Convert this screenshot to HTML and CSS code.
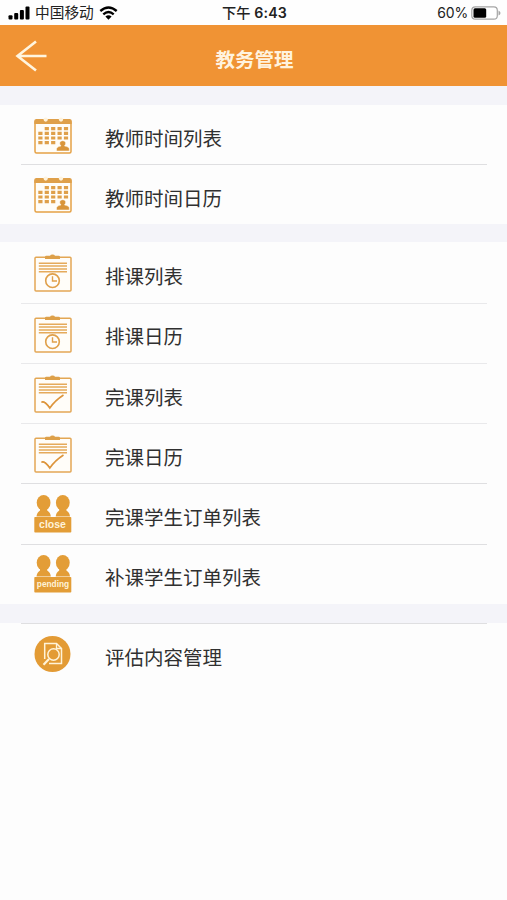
FILE: index.html
```html
<!DOCTYPE html>
<html lang="zh-CN">
<head>
  <meta charset="UTF-8">
  <meta name="viewport" content="width=device-width, initial-scale=1.0">
  <link rel="stylesheet" href="styles.css">
  <title>教务管理</title>
</head>
<body>
  <!-- shared icons -->
  <svg class="sprite" width="0" height="0">
    <symbol id="calendar" viewBox="0 0 40 40">
      <rect x="2" y="5.500" width="36" height="32.500" rx="1.5" fill="#fffdf8" stroke="#e5a145" stroke-width="1.5"/>
      <path d="M1.3 9V6Q1.3 4 3.3 4H36.7Q38.7 4 38.7 6V9Z" fill="#dfa04a"/>
      <circle cx="12.700" cy="4.600" r="2.100" fill="#fff3dc"/>
      <circle cx="28" cy="4.600" r="2.100" fill="#fff3dc"/>
      <path d="M11.700 13.600H35.500M5.300 18.300H35.500M5.300 23H35.500M5.300 27.700H23" stroke="#dfa04a" stroke-width="3.200" stroke-dasharray="4.200 2.200"/>
      <path d="M23.500 36V33.700Q24 31.500 28 31Q26.300 29.300 26.700 27.700Q27.200 25.700 29.700 25.700Q32.200 25.700 32.700 27.700Q33 29.300 31.500 31Q35.800 31.500 36.300 33.700V36Z" fill="#d9953a" stroke="#fffdf8" stroke-width=".5"/>
    </symbol>
    <symbol id="board" viewBox="0 0 40 40">
      <rect x="2" y="5.200" width="36" height="33.800" rx="1" fill="#fffdf9" stroke="#e3a755" stroke-width="1.500"/>
      <path d="M12 7V5Q12 3.700 13.300 3.700H17Q17.500 2.500 19.500 2.500Q21.500 2.500 22 3.700H25.700Q27 3.700 27 5V7Z" fill="#dda04a"/>
      <path d="M5.800 11.200H34M5.800 14.100H34M5.800 17H34M5.800 19.800H34" stroke="#e5aa5b" stroke-width="1.500"/>
    </symbol>
    <symbol id="board-clock" viewBox="0 0 40 40">
      <use href="#board"/>
      <circle cx="19.500" cy="28.700" r="6.800" fill="#fffdf9" stroke="#e0a04a" stroke-width="1.600"/>
      <path d="M19.500 24.300V29H24" fill="none" stroke="#e0a04a" stroke-width="1.400"/>
    </symbol>
    <symbol id="board-check" viewBox="0 0 40 40">
      <use href="#board"/>
      <path d="M8.500 29Q12 28 16.800 35Q22 27.500 30.500 22" fill="none" stroke="#dd953c" stroke-width="1.600"/>
      <path d="M8.500 29.300Q11.500 26.800 16.800 34.300" fill="none" stroke="#dd953c" stroke-width="1"/>
    </symbol>
    <symbol id="people" viewBox="0 0 40 40">
      <g id="person" fill="#e39d37">
        <ellipse cx="10.600" cy="8.800" rx="6.900" ry="7.700"/>
        <path d="M7 13H14.200V16.500Q17.600 18.500 17.800 22.500H3.500Q3.800 18.500 7 16.500Z"/>
      </g>
      <use href="#person" x="19.200"/>
      <rect x="1.300" y="23" width="37" height="15.500" rx=".8" fill="#e39d37"/>
    </symbol>
    <symbol id="review" viewBox="0 0 40 40">
      <circle cx="19.500" cy="20" r="18" fill="#e39b35"/>
      <path d="M11.700 25V9.500H23.500L28.500 14.500V29.500H16" fill="none" stroke="#fff3d9" stroke-width="1.500"/>
      <path d="M23.500 9.500V14.500H28.500" fill="none" stroke="#fff3d9" stroke-width="1.300"/>
      <circle cx="20.500" cy="20.500" r="5.700" fill="#e39b35" stroke="#fff3d9" stroke-width="1.500"/>
      <path d="M16 25L10.500 30.700" stroke="#fff3d9" stroke-width="2.200"/>
    </symbol>
  </svg>

  <div class="status-bar">
    <div class="carrier">
      <svg width="22" height="14" viewBox="0 0 22 14">
        <rect x=".5" y="9.300" width="4" height="4.200" rx="1"/>
        <rect x="6.200" y="7" width="4" height="6.500" rx="1"/>
        <rect x="11.900" y="4" width="4" height="9.500" rx="1"/>
        <rect x="17.500" y=".5" width="4" height="13" rx="1"/>
      </svg>
      <span>中国移动</span>
      <svg width="19" height="14" viewBox="0 0 19 14">
        <path d="M1.300 5Q9.500-2 17.700 5M4.300 8.300Q9.500 3.900 14.700 8.300" fill="none" stroke="#000" stroke-width="2.400"/>
        <path d="M6.400 10.500Q9.500 8 12.600 10.500L9.500 13.700Z"/>
      </svg>
    </div>
    <div class="time">下午 <b>6:43</b></div>
    <div class="power">
      <span>60%</span>
      <svg width="30" height="14" viewBox="0 0 30 14">
        <rect x=".8" y=".8" width="25.500" height="12.400" rx="3.500" fill="#fff" stroke="#a5a5a5" stroke-width="1.200"/>
        <rect x="2.500" y="2.300" width="12.700" height="9.400" rx="1.500"/>
        <path d="M27.500 4.500Q29.500 5.500 29.500 7Q29.500 8.500 27.500 9.500Z" fill="#a5a5a5"/>
      </svg>
    </div>
  </div>

  <header class="nav-bar">
    <svg width="32" height="32" viewBox="0 0 32 32">
      <path d="M21 1.500L2.500 16L21 30.500M2.500 16H31.500" fill="none" stroke="#fff5df" stroke-width="2.600"/>
    </svg>
    <h1>教务管理</h1>
  </header>

  <main class="menu">
    <section class="group first">
      <a class="row"><svg class="icon"><use href="#calendar"/></svg><span>教师时间列表</span></a>
      <a class="row strong"><svg class="icon"><use href="#calendar"/></svg><span>教师时间日历</span></a>
    </section>

    <section class="group">
      <a class="row"><svg class="icon"><use href="#board-clock"/></svg><span>排课列表</span></a>
      <a class="row"><svg class="icon"><use href="#board-clock"/></svg><span>排课日历</span></a>
      <a class="row"><svg class="icon"><use href="#board-check"/></svg><span>完课列表</span></a>
      <a class="row"><svg class="icon"><use href="#board-check"/></svg><span>完课日历</span></a>
      <a class="row strong">
        <svg class="icon"><use href="#people"/><text class="tag" x="19.500" y="34">close</text></svg>
        <span>完课学生订单列表</span>
      </a>
      <a class="row strong">
        <svg class="icon"><use href="#people"/><text class="tag small" x="20" y="33">pending</text></svg>
        <span>补课学生订单列表</span>
      </a>
    </section>

    <section class="group last">
      <a class="row strong"><svg class="icon"><use href="#review"/></svg><span>评估内容管理</span></a>
    </section>
  </main>
</body>
</html>
```
FILE: styles.css
```css
* {
  box-sizing: border-box;
}

body {
  margin: 0;
  height: 100vh;
  display: flex;
  flex-direction: column;
  font-family: "Liberation Sans", "Noto Sans CJK SC", sans-serif;
  color: #303030;
  background-color: #fdfdfd;
  overflow: hidden;
}

.sprite {
  position: absolute;
}

.status-bar {
  height: 25px;
  display: grid;
  grid-template-columns: 1fr auto 1fr;
  align-items: center;
  padding: 1px 6px 0 8px;
  background-color: #fefefe;
  color: #222222;
  font-size: 14.7px;
  line-height: 22px;
}

.carrier,
.power {
  display: flex;
  align-items: center;
}

.carrier {
  gap: 5px;
}

.power {
  justify-content: flex-end;
  gap: 3px;
  font-family: Inter, sans-serif;
  font-size: 14px;
}

.power span {
  letter-spacing: -0.2px;
}

.time {
  font-family: Inter, "Noto Sans CJK SC", sans-serif;
  font-size: 14.2px;
  font-weight: 500;
}

.time b {
  font-weight: 600;
  letter-spacing: 0.2px;
}

.nav-bar {
  height: 61px;
  display: grid;
  grid-template-columns: 32px 1fr 30px;
  align-items: center;
  padding: 0 15px;
  background-color: #f09334;
}

.nav-bar h1 {
  margin: 8px 0 0;
  text-align: center;
  font-size: 19.5px;
  font-weight: 600;
  line-height: 28px;
  color: #fff3df;
}

.menu {
  flex: 1;
  display: flex;
  flex-direction: column;
  padding-top: 19px;
  background-color: #f4f4f9;
}

.group {
  margin-bottom: 18px;
  background-color: #fdfdfd;
}

.group.last {
  flex: 1;
  margin: 1px 0 0;
}

.row {
  height: 60.3px;
  display: flex;
  align-items: center;
  margin: 0 20px 0 21px;
  padding-left: 12px;
  border-top: 1.5px solid #e9e9eb;
}

.group.first .row:first-child {
  height: 59px;
}

.row:first-child {
  border-top-color: transparent;
}

.row.strong {
  border-top-color: #dfdfe1;
}

.icon {
  width: 40px;
  height: 40px;
  flex: none;
  margin-bottom: 1px;
}

.group.last .icon {
  margin-bottom: 0;
}

.row span {
  margin: 8px 0 0 32px;
  font-size: 19.5px;
  line-height: 28px;
}

.group.last span {
  margin-top: 9px;
}

.tag {
  font-size: 10.5px;
  font-weight: bold;
  text-anchor: middle;
  fill: #fff3d9;
}

.tag.small {
  font-size: 8.3px;
}
```
